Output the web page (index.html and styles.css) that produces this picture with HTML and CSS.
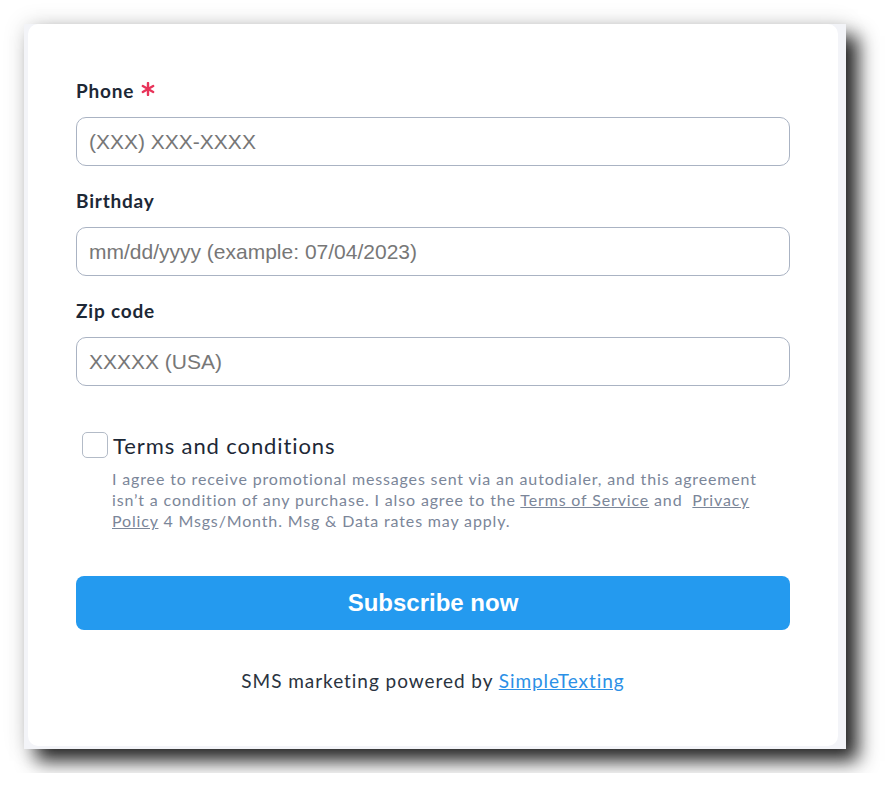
FILE: index.html
```html
<!doctype html>
<html>
  <head>
    <title>Subscribe</title>
    <link rel="stylesheet" href="styles.css">
  </head>
  <body>
    <div class="frame">
      <form class="card">
        <div class="field">
          <label class="field-label" for="phone">Phone
            <svg class="required" width="14" height="14" viewBox="0 0 14 14">
              <g stroke="#e8345a" stroke-width="2.4" stroke-linecap="round">
                <line x1="7" y1="1" x2="7" y2="13"/>
                <line x1="1.8" y1="4" x2="12.2" y2="10"/>
                <line x1="1.8" y1="10" x2="12.2" y2="4"/>
              </g>
            </svg>
          </label>
          <input class="text-input" id="phone" type="text" placeholder="(XXX) XXX-XXXX">
        </div>

        <div class="field">
          <label class="field-label" for="birthday">Birthday</label>
          <input class="text-input" id="birthday" type="text" placeholder="mm/dd/yyyy (example: 07/04/2023)">
        </div>

        <div class="field">
          <label class="field-label" for="zip">Zip code</label>
          <input class="text-input" id="zip" type="text" placeholder="XXXXX (USA)">
        </div>

        <div class="terms">
          <label class="terms-row">
            <span class="checkbox"></span>
            <span class="terms-title">Terms and conditions</span>
          </label>
          <p class="disclaimer">I agree to receive promotional messages sent via an autodialer, and this agreement isn’t a condition of any purchase. I also agree to the <a href="#">Terms of Service</a> and&nbsp; <a href="#">Privacy Policy</a> 4 Msgs/Month. Msg &amp; Data rates may apply.</p>
        </div>

        <button class="subscribe-button" type="button">Subscribe now</button>

        <p class="powered">SMS marketing powered by <a href="#">SimpleTexting</a></p>
      </form>
    </div>
  </body>
</html>
```

FILE: styles.css
```css
body {
  margin: 0;
  padding: 24px;
  background-color: #fff;
  font-family: Lato, "Liberation Sans", sans-serif;
}
.frame {
  width: 822px;
  height: 725px;
  box-sizing: border-box;
  padding: 0 8px 3px 4px;
  background-color: #f3f4f8;
  box-shadow: 12px 12px 18px rgba(0, 0, 0, 0.85), 0 0 22px rgba(0, 0, 0, 0.12);
}
.card {
  height: 722px;
  box-sizing: border-box;
  padding: 54px 48px 0;
  background-color: #fff;
  border-radius: 10px;
}
.field {
  margin-bottom: 22px;
}
.field-label {
  display: flex;
  align-items: center;
  gap: 7px;
  height: 24px;
  margin-bottom: 15px;
  font-size: 19px;
  font-weight: 700;
  letter-spacing: 0.8px;
  color: #1d2836;
}
.required {
  margin-top: -2px;
}
.text-input {
  display: block;
  width: 100%;
  height: 49px;
  box-sizing: border-box;
  padding: 0 12px;
  border: 1px solid #aab3c3;
  border-radius: 10px;
  font-family: "Liberation Sans", Arial, sans-serif;
  font-size: 21px;
  color: #333;
  outline: none;
}
.text-input::placeholder {
  color: #777;
}
.terms {
  margin-top: 46px;
}
.terms-row {
  display: flex;
  align-items: center;
  gap: 5px;
  padding-left: 6px;
  height: 26px;
}
.checkbox {
  width: 24px;
  height: 24px;
  border: 1px solid #b3bbc7;
  border-radius: 5px;
  background-color: #fff;
}
.terms-title {
  font-size: 22px;
  letter-spacing: 0.9px;
  color: #1d2836;
}
.disclaimer {
  margin: 10px 0 0 36px;
  font-size: 16px;
  line-height: 21px;
  letter-spacing: 0.85px;
  color: #7b8699;
}
.disclaimer a {
  color: #7b8699;
}
.subscribe-button {
  display: block;
  width: 100%;
  height: 54px;
  margin-top: 45px;
  border: none;
  border-radius: 8px;
  background-color: #249aef;
  color: #fff;
  font-family: "Liberation Sans", Arial, sans-serif;
  font-size: 24px;
  font-weight: bold;
  cursor: pointer;
}
.powered {
  margin: 39px 0 0;
  text-align: center;
  font-size: 19px;
  line-height: 24px;
  letter-spacing: 0.95px;
  color: #2a3340;
}
.powered a {
  color: #2b90e6;
}
```
